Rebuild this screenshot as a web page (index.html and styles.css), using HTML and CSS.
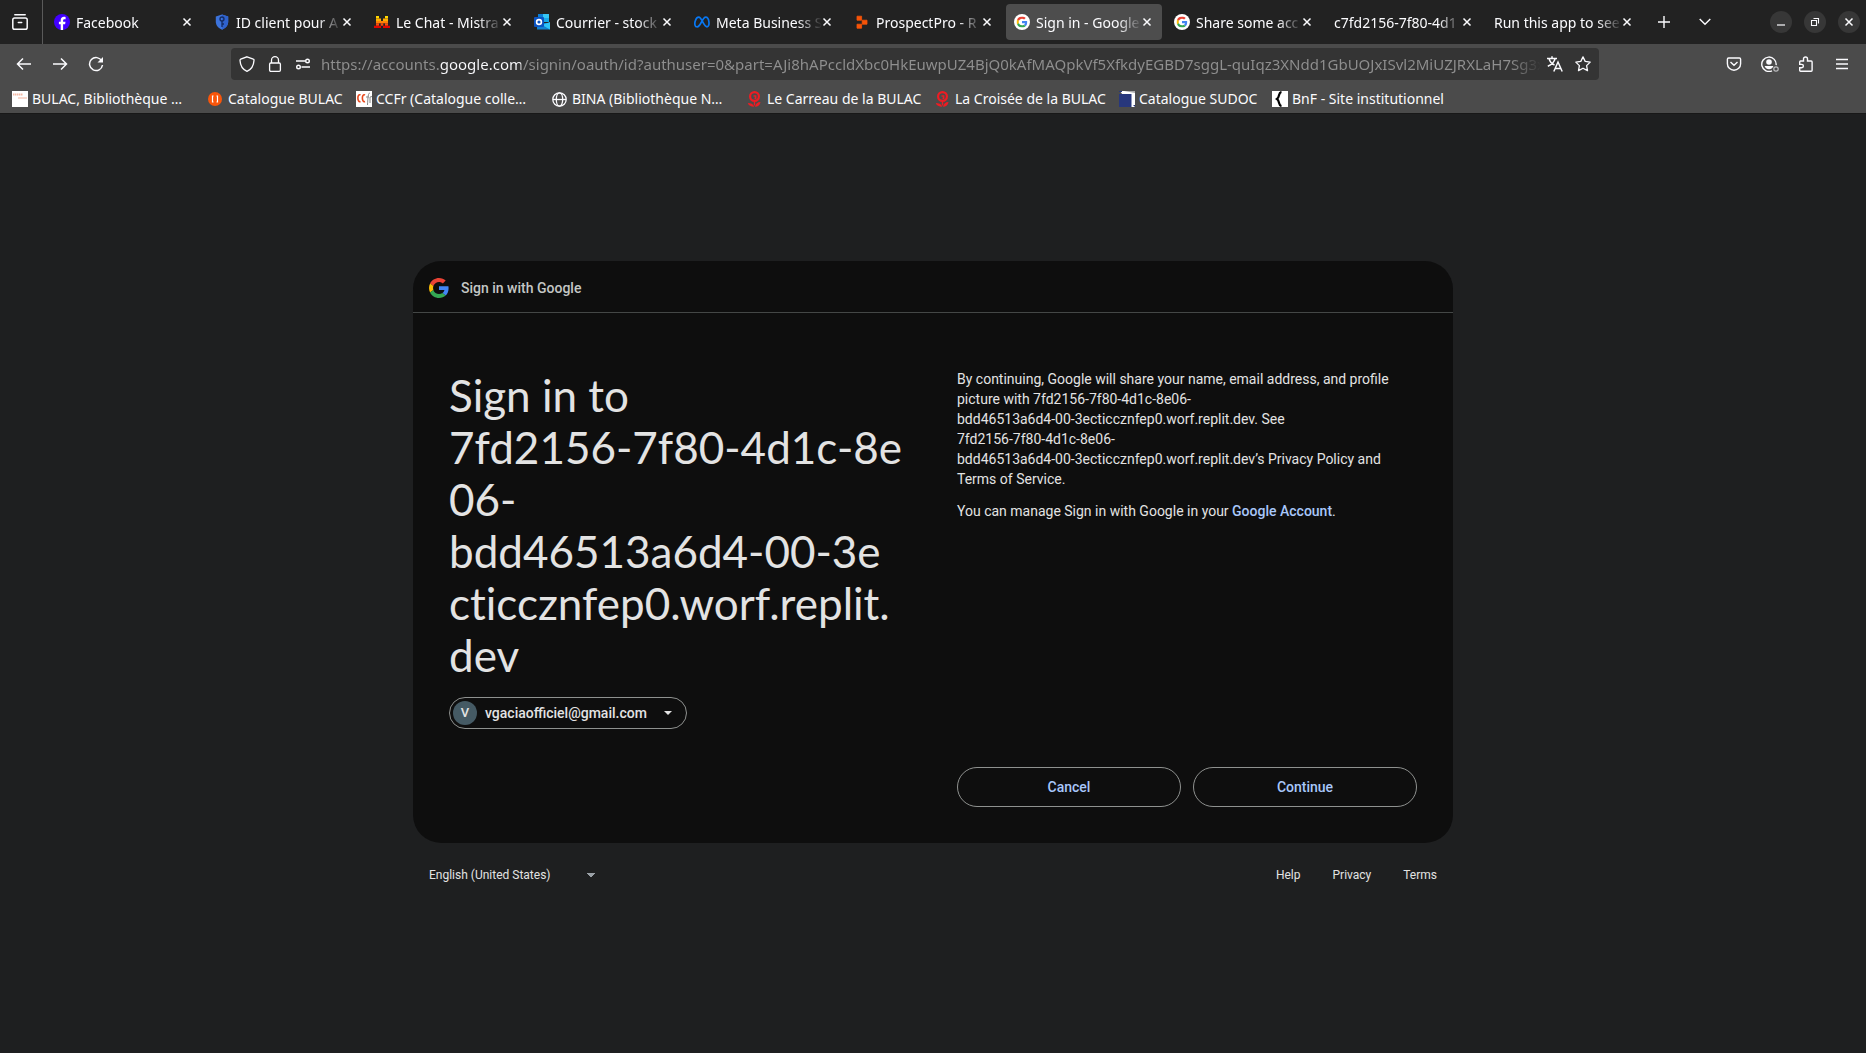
FILE: index.html
```html
<!DOCTYPE html>
<html lang="en">
<head>
<meta charset="utf-8">
<meta name="viewport" content="width=device-width, initial-scale=1">
<title>Sign in - Google Accounts</title>
<link rel="stylesheet" href="styles.css">
</head>
<body>
<svg class="sprite" aria-hidden="true">
  <symbol id="x" viewBox="0 0 10 10"><path d="M1.500 1.500l7 7M8.500 1.500l-7 7" fill="none" stroke="currentColor" stroke-width="1.500"/></symbol>
  <symbol id="g" viewBox="0 0 48 48">
    <path fill="#ea4335" d="M24 9.500c3.540 0 6.710 1.220 9.210 3.600l6.850-6.850C35.900 2.380 30.470 0 24 0 14.620 0 6.510 5.380 2.560 13.220l7.980 6.190C12.430 13.720 17.740 9.500 24 9.500z"/>
    <path fill="#4285f4" d="M46.980 24.550c0-1.570-.15-3.090-.38-4.550H24v9.020h12.940c-.58 2.960-2.260 5.480-4.780 7.180l7.730 6c4.510-4.180 7.090-10.360 7.090-17.650z"/>
    <path fill="#fbbc05" d="M10.530 28.590c-.48-1.450-.76-2.990-.76-4.590s.27-3.140.76-4.590l-7.980-6.190C.92 16.460 0 20.120 0 24c0 3.880.92 7.540 2.560 10.780l7.970-6.190z"/>
    <path fill="#34a853" d="M24 48c6.480 0 11.930-2.130 15.890-5.810l-7.730-6c-2.150 1.450-4.920 2.300-8.160 2.300-6.260 0-11.570-4.220-13.470-9.910l-7.980 6.190C6.510 42.620 14.620 48 24 48z"/>
  </symbol>
  <symbol id="gtab" viewBox="0 0 16 16"><circle cx="8" cy="8" r="8" fill="#fff"/><use href="#g" x="2.500" y="2.500" width="11" height="11"/></symbol>
  <symbol id="flower" viewBox="0 0 16 16"><g fill="none" stroke="#ee1c23"><circle cx="7.500" cy="5.500" r="4.400" stroke-width="2.200"/><path d="M6.500 5h2.200v2.200H7.500M7.500 10v4.500" stroke-width="1.400"/></g><path d="M7.300 15.800C4 15.800 1.500 14.500.8 12c3 0 5.500 1 6.500 3.800zM8 15.800c.5-3 2.500-4.800 5.500-4.800-.3 2.800-2.500 4.800-5.500 4.800z" fill="#ee1c23"/></symbol>
</svg>

<header class="browser">
  <div class="tabbar">
    <button class="tool view" aria-label="Recent browsing"><svg width="16" height="16" viewBox="0 0 16 16"><g fill="none" stroke="currentColor" stroke-width="1.500" stroke-linecap="round"><path d="M2.800 .8h10.400"/><rect x=".8" y="4" width="14.400" height="11.200" rx="1.800"/><path d="M6.300 8.500h3.400"/></g></svg></button>
    <div class="tabs" role="tablist">
      <div class="tab"><button class="tab-title" role="tab"><svg class="fav" viewBox="0 0 16 16"><circle cx="8" cy="8" r="8" fill="#4200ff"/><path d="M6.700 16v-5.700H4.900V7.700h1.800V6.400c0-2.400 1.200-3.600 3.300-3.600.7 0 1.300.1 1.600.2v2.200h-1c-1.200 0-1.500.5-1.500 1.500v1h2.400l-.4 2.600h-2V16z" fill="#fff"/></svg><span>Facebook</span></button><button class="close" aria-label="Close tab"><svg><use href="#x"/></svg></button></div>
      <div class="tab"><button class="tab-title" role="tab"><svg class="fav" viewBox="0 0 16 16"><path d="M8 .5l6.200 2v5c0 4-2.500 6.500-6.200 8.200C4.300 14 1.800 11.500 1.800 7.500v-5z" fill="#3c73db"/><path d="M8 .5l6.200 2v5c0 4-2.500 6.500-6.200 8.200z" fill="#2f62cc"/><g fill="none" stroke="#142b62" stroke-width="1.300"><circle cx="8" cy="5" r="2"/><path d="M8 7v6M8 10h2"/></g></svg><span>ID client pour A</span></button><button class="close" aria-label="Close tab"><svg><use href="#x"/></svg></button></div>
      <div class="tab"><button class="tab-title" role="tab"><svg class="fav" viewBox="0 0 16 16"><path d="M2 2h3v2.500H2zM11 2h3v2.500h-3z" fill="#ffd800"/><path d="M2 4.500h5V7H2zM9 4.500h5V7H9z" fill="#ffaf00"/><path d="M2 7h12v2.300H2z" fill="#ff8205"/><path d="M2 9.300h3v2.400H2zM6.700 9.300h2.600v2.400H6.700zM11 9.300h3v2.400h-3z" fill="#fa500f"/><path d="M0 11.700h7V14H0zM9 11.700h7V14H9z" fill="#e10500"/></svg><span>Le Chat - Mistra</span></button><button class="close" aria-label="Close tab"><svg><use href="#x"/></svg></button></div>
      <div class="tab"><button class="tab-title" role="tab"><svg class="fav" viewBox="0 0 16 16"><path d="M4 0h11v8H4z" fill="#0a7bd4"/><path d="M9 0h6v4H9z" fill="#35c5f4"/><path d="M9 4h6v4H9z" fill="#16a7e8"/><path d="M3 9h13v6.500H3z" fill="#1182d2"/><path d="M16 8v7.500L8 11z" fill="#2fc4f7"/><rect y="3" width="10" height="10" rx="1" fill="#0b53c1"/><circle cx="5" cy="8" r="2.400" fill="none" stroke="#fff" stroke-width="1.600"/></svg><span>Courrier - stock</span></button><button class="close" aria-label="Close tab"><svg><use href="#x"/></svg></button></div>
      <div class="tab"><button class="tab-title" role="tab"><svg class="fav" viewBox="0 0 16 16"><path d="M1.700 12.500C-.3 10 1.500 3.200 4.800 3.200c3 0 4.700 9.600 8.200 9.600 3.300 0 2.300-9.600-1.300-9.600-3.200 0-5.200 9.600-8.400 9.600-.7 0-1.200-.1-1.600-.3z" fill="none" stroke="#0877f2" stroke-width="1.700"/></svg><span>Meta Business S</span></button><button class="close" aria-label="Close tab"><svg><use href="#x"/></svg></button></div>
      <div class="tab"><button class="tab-title" role="tab"><svg class="fav" viewBox="0 0 16 16"><path d="M3 2.200h4.600v4H3zM8.200 6.200h4.800v4H8.200zM3 10.200h4.600v4H3z" fill="#f75408" stroke="#f75408" stroke-width=".8" stroke-linejoin="round"/></svg><span>ProspectPro - R</span></button><button class="close" aria-label="Close tab"><svg><use href="#x"/></svg></button></div>
      <div class="tab active"><button class="tab-title" role="tab" aria-selected="true"><svg class="fav"><use href="#gtab"/></svg><span>Sign in - Google</span></button><button class="close" aria-label="Close tab"><svg><use href="#x"/></svg></button></div>
      <div class="tab"><button class="tab-title" role="tab"><svg class="fav"><use href="#gtab"/></svg><span>Share some acc</span></button><button class="close" aria-label="Close tab"><svg><use href="#x"/></svg></button></div>
      <div class="tab"><button class="tab-title" role="tab"><span>c7fd2156-7f80-4d1</span></button><button class="close" aria-label="Close tab"><svg><use href="#x"/></svg></button></div>
      <div class="tab"><button class="tab-title" role="tab"><span>Run this app to see</span></button><button class="close" aria-label="Close tab"><svg><use href="#x"/></svg></button></div>
    </div>
    <button class="tool plus" aria-label="New tab"><svg width="12" height="12" viewBox="0 0 12 12"><path d="M6 0v12M0 6h12" stroke="currentColor" stroke-width="1.400"/></svg></button>
    <button class="tool list" aria-label="List all tabs"><svg width="12" height="8" viewBox="0 0 12 8"><path d="M.7 1L6 6.300 11.300 1" fill="none" stroke="currentColor" stroke-width="1.400"/></svg></button>
    <div class="window">
      <button aria-label="Minimize"><svg width="10" height="10" viewBox="0 0 10 10"><path d="M1 8h8" stroke="currentColor" stroke-width="1.200"/></svg></button>
      <button aria-label="Restore"><svg width="10" height="10" viewBox="0 0 10 10"><path d="M1.500 3.500h5v5h-5zM3.500 1.500h5v5" fill="none" stroke="currentColor" stroke-width="1.100"/></svg></button>
      <button aria-label="Close window"><svg width="10" height="10"><use href="#x"/></svg></button>
    </div>
  </div>

  <div class="navbar">
    <button class="tool" aria-label="Back"><svg width="16" height="16" viewBox="0 0 16 16"><path d="M15 8H1.800M7 2.500L1.500 8 7 13.500" fill="none" stroke="currentColor" stroke-width="1.500"/></svg></button>
    <button class="tool" aria-label="Forward"><svg width="16" height="16" viewBox="0 0 16 16"><path d="M1 8h13.200M9 2.500L14.500 8 9 13.500" fill="none" stroke="currentColor" stroke-width="1.500"/></svg></button>
    <button class="tool" aria-label="Reload"><svg width="16" height="16" viewBox="0 0 16 16"><path d="M13.800 5A6.500 6.500 0 1 0 14.500 9" fill="none" stroke="currentColor" stroke-width="1.500"/><path d="M15 1v5.500H9.500z" fill="currentColor"/></svg></button>
    <div class="spring"></div>
    <div class="urlbar">
      <button class="in" aria-label="Tracking protection"><svg width="16" height="16" viewBox="0 0 16 16"><path d="M8 .8l6.300 2.400c.6.200.8.600.7 1.200-.3 5-2.300 9-7 10.900C3.300 13.400 1.300 9.400 1 4.400c0-.6.200-1 .7-1.200z" fill="none" stroke="currentColor" stroke-width="1.300"/></svg></button>
      <button class="in" aria-label="Site security"><svg width="16" height="16" viewBox="0 0 16 16"><g fill="none" stroke="currentColor" stroke-width="1.300"><rect x="2.600" y="7" width="10.800" height="8.300" rx="1.200"/><path d="M4.500 7V4.200a3.500 3.500 0 0 1 7 0V7"/></g></svg></button>
      <button class="in" aria-label="Permissions"><svg width="16" height="16" viewBox="0 0 16 16"><g fill="none" stroke="currentColor" stroke-width="1.400"><circle cx="12.500" cy="5" r="1.800"/><path d="M1 5h9M6.500 11H15"/><circle cx="3.500" cy="11" r="1.800"/></g></svg></button>
      <input class="url" type="text" aria-label="Address" value="https://accounts.google.com/signin/oauth/id?authuser=0&amp;part=AJi8hAPccldXbc0HkEuwpUZ4BjQ0kAfMAQpkVf5XfkdyEGBD7sggL-quIqz3XNdd1GbUOJxISvl2MiUZJRXLaH7Sg3x">
      <button class="in" aria-label="Translate page"><svg width="16" height="16" viewBox="0 0 16 16"><g fill="none" stroke="currentColor" stroke-width="1.500"><path d="M0 2.500h10M5 .3v2.200M2 2.500c1 3.800 3.200 5.500 5.500 6.500M8.200 2.500C7 6.500 4 9 .8 10.200M6.800 15.500l4.200-9.500 4.200 9.500M8.200 12.500h5.600"/></g></svg></button>
      <button class="in" aria-label="Bookmark this page"><svg width="16" height="16" viewBox="0 0 16 16"><path d="M8 .9l2.200 4.500 5 .7-3.600 3.500.9 5L8 12.200l-4.500 2.400.9-5L.8 6.100l5-.7z" fill="none" stroke="currentColor" stroke-width="1.300" stroke-linejoin="round"/></svg></button>
    </div>
    <div class="spring"></div>
    <button class="tool" aria-label="Pocket"><svg width="16" height="16" viewBox="0 0 16 16"><path d="M2.600 2h10.800c.7 0 1.200.5 1.200 1.200v4.500a6.600 6.600 0 0 1-13.200 0V3.200C1.400 2.500 1.900 2 2.600 2zM4.500 6l3.500 3.300L11.500 6" fill="none" stroke="currentColor" stroke-width="1.400"/></svg></button>
    <button class="tool" aria-label="Account"><svg width="18" height="16" viewBox="0 0 18 16"><g fill="none" stroke="currentColor"><path d="M11 14.800a7.200 7.200 0 1 1 4.100-5.600" stroke-width="1.400"/><circle cx="15" cy="13" r="2.200" stroke-width="1.200" opacity=".65"/></g><circle cx="8" cy="6" r="2.800" fill="currentColor"/><path d="M3.600 10h8.800c-.5 2-2 3.200-4.400 3.200S4.100 12 3.600 10z" fill="currentColor"/></svg></button>
    <button class="tool" aria-label="Extensions"><svg width="16" height="16" viewBox="0 0 16 16"><path d="M5.500 5V3a2 2 0 0 1 4 0v2h3.700c.5 0 .9.400.9.900v8.400c0 .5-.4.900-.9.900H2.600c-.5 0-.9-.4-.9-.9v-2.500h2a1.700 1.700 0 0 0 0-3.400h-2V5.900c0-.5.4-.9.900-.9z" fill="none" stroke="currentColor" stroke-width="1.400"/></svg></button>
    <button class="tool" aria-label="Menu"><svg width="14" height="12" viewBox="0 0 14 12"><path d="M1 1.500h12M1 6h12M1 10.500h12" stroke="currentColor" stroke-width="1.300"/></svg></button>
  </div>

  <nav class="bookmarks" aria-label="Bookmarks">
    <a href="#"><svg viewBox="0 0 16 16"><path fill="#fff" d="M0 0h16v16H0z"/><path d="M1 3.500h10" stroke="#f4b8a4" stroke-width="2" stroke-dasharray="1.500 .5"/><path d="M6 7h9" stroke="#f3b29c"/></svg><span>BULAC, Bibliothèque …</span></a>
    <a href="#"><svg viewBox="0 0 16 16"><circle cx="7" cy="8" r="7" fill="#f9560b"/><path d="M5.500 5h-1v6h1M8.500 5h1v6h-1" fill="none" stroke="#fff" stroke-width="1.200"/></svg><span>Catalogue BULAC</span></a>
    <a href="#"><svg viewBox="0 0 16 16"><path fill="#fff" d="M0 0h16v16H0z"/><g fill="none"><path d="M4.500 4C1 2 1 12 4.500 10.500M9 4C5.500 2 5.500 12 9 10.500" stroke="#e8471b" stroke-width="1.600"/><path d="M14 2c-2 0-2 4-2.500 12M10 6h3M14 12V6l2-.5" stroke="#888"/></g></svg><span>CCFr (Catalogue colle…</span></a>
    <a href="#"><svg viewBox="0 0 16 16"><g fill="none" stroke="#fbfbfe" stroke-width="1.300"><circle cx="7.500" cy="8.500" r="6.700"/><ellipse cx="7.500" cy="8.500" rx="3.200" ry="6.700"/><path d="M1 8.500h13"/></g></svg><span>BINA (Bibliothèque N…</span></a>
    <a href="#"><svg><use href="#flower"/></svg><span>Le Carreau de la BULAC</span></a>
    <a href="#"><svg><use href="#flower"/></svg><span>La Croisée de la BULAC</span></a>
    <a href="#"><svg viewBox="0 0 16 16"><path fill="#fff" d="M1 0h15v16h-4z"/><path fill="#aaa" d="M5 0h11v2z"/><path fill="#27377c" d="M0 3h12.500v13H0zM0 0h3v1H0zM14 14h2v2z"/></svg><span>Catalogue SUDOC</span></a>
    <a href="#"><svg viewBox="0 0 16 16"><path fill="#fff" d="M0 0h16v16H0z"/><path d="M9.500 1C6 1.500 8 6 5 8c3 2 1 6.500 4.500 7" fill="none" stroke="#000" stroke-width="2.200"/></svg><span>BnF - Site institutionnel</span></a>
  </nav>
</header>

<div class="page">
  <main class="card">
    <div class="card-head"><svg width="20" height="20"><use href="#g"/></svg><span>Sign in with Google</span></div>
    <div class="card-body">
      <section class="intro">
        <h1>Sign in to<br>7fd2156-7f80-4d1c-8e<br>06-<br>bdd46513a6d4-00-3e<br>cticcznfep0.worf.replit.<br>dev</h1>
        <button class="account"><span class="avatar">V</span><span>vgaciaofficiel@gmail.com</span><svg width="8" height="4" viewBox="0 0 8 4"><path d="M0 0h8L4 4z" fill="currentColor"/></svg></button>
      </section>
      <section class="consent">
        <p>By continuing, Google will share your name, email address, and profile<br>picture with 7fd2156-7f80-4d1c-8e06-<br>bdd46513a6d4-00-3ecticcznfep0.worf.replit.dev. See<br>7fd2156-7f80-4d1c-8e06-<br>bdd46513a6d4-00-3ecticcznfep0.worf.replit.dev’s Privacy Policy and<br>Terms of Service.</p>
        <p>You can manage Sign in with Google in your <a href="#">Google Account</a>.</p>
        <div class="actions"><button>Cancel</button><button>Continue</button></div>
      </section>
    </div>
  </main>
  <footer class="foot">
    <select class="lang" aria-label="Language"><option>English (United States)</option></select>
    <nav><a href="#">Help</a><a href="#">Privacy</a><a href="#">Terms</a></nav>
  </footer>
</div>
</body>
</html>
```
FILE: styles.css
```css
* { box-sizing: border-box; }

body {
  margin: 0;
  min-height: 100vh;
  display: flex;
  flex-direction: column;
  background: #1e1f20;
  font-family: Roboto, sans-serif;
  color: #e3e3e3;
}

button, input, select {
  font: inherit;
  color: inherit;
  background: none;
  border: 0;
  padding: 0;
  margin: 0;
}

a { color: inherit; text-decoration: none; }
svg { display: block; flex: none; }
.sprite { position: absolute; width: 0; height: 0; }

/* Browser chrome */
.browser {
  font-family: "Noto Sans", sans-serif;
  font-size: 14px;
  color: #fbfbfe;
  background: #4b4b4b;
  border-bottom: 1px solid #181818;
}

.tabbar { display: flex; align-items: center; height: 44px; background: #222; }

.tool {
  flex: none;
  width: 36px;
  height: 36px;
  display: flex;
  align-items: center;
  justify-content: center;
}

.view { width: 43px; height: 44px; border-right: 1px solid #5a5a5a; padding-right: 2px; }
.tabs { display: flex; gap: 4px; padding: 0 4px 0 3px; flex: 0 1 1603px; min-width: 0; }

.tab {
  flex: 1;
  min-width: 0;
  height: 36px;
  display: flex;
  align-items: center;
  padding: 0 10px 0 8px;
  border-radius: 4px;
}

.tab.active { background: #4d4d4d; }

.tab-title { flex: 1; min-width: 0; display: flex; align-items: center; gap: 6px; text-align: left; }
.tab-title span {
  flex: 1;
  overflow: hidden;
  white-space: nowrap;
  mask-image: linear-gradient(to left, transparent, #000 24px);
}
.fav { width: 16px; height: 16px; }
.close svg { width: 10px; height: 10px; }

.plus { margin-right: 5px; }
.window { margin-left: auto; display: flex; gap: 12px; padding-right: 6px; }
.window button {
  width: 22px;
  height: 22px;
  border-radius: 50%;
  background: #373737;
  display: flex;
  align-items: center;
  justify-content: center;
}

.navbar { display: flex; align-items: center; padding: 0 6px; height: 40px; }
.spring { flex: 0 1 117px; }

.urlbar {
  flex: 1;
  min-width: 0;
  height: 32px;
  display: flex;
  align-items: center;
  padding: 0 2px;
  background: #343434;
  border-radius: 4px;
}

.in { flex: none; width: 28px; height: 28px; display: flex; align-items: center; justify-content: center; }

/* The host name is brighter than the rest, and the tail fades out */
.url {
  flex: 1;
  min-width: 0;
  height: 28px;
  margin-left: 4px;
  font-size: 15px;
  color: transparent;
  background: linear-gradient(to right, #8f8f8f 119px, #fbfbfe 119px, #fbfbfe 200px, #8f8f8f 200px, #8f8f8f calc(100% - 30px), transparent);
  background-clip: text;
  -webkit-background-clip: text;
}

.bookmarks {
  display: grid;
  grid-template-columns: 196px 148px 196px 195px 188px 184px 153px auto;
  height: 29px;
  padding-left: 12px;
}

.bookmarks a { display: flex; align-items: center; gap: 4px; height: 29px; white-space: nowrap; }
.bookmarks svg { width: 16px; height: 16px; }

/* Sign-in page */
.page {
  flex: 1;
  display: flex;
  flex-direction: column;
  justify-content: center;
  width: 100%;
  max-width: 1040px;
  margin: 0 auto;
  padding-bottom: 15px;
}

.card {
  display: flex;
  flex-direction: column;
  min-height: 582px;
  background: #0e0e0e;
  border-radius: 28px;
}

.card-head {
  display: flex;
  align-items: center;
  gap: 12px;
  height: 52px;
  padding: 3px 16px 0;
  border-bottom: 1px solid #444746;
  font-size: 14px;
  font-weight: 500;
  color: #c4c7c5;
}

.card-body { flex: 1; display: grid; grid-template-columns: 1fr 1fr; padding: 56px 36px 36px; }

h1 {
  margin: 0 0 16px;
  font-family: Lato, sans-serif;
  font-size: 44px;
  line-height: 52px;
  font-weight: 400;
  font-variant-ligatures: none;
  white-space: nowrap;
}

.account {
  display: flex;
  align-items: center;
  min-width: 238px;
  height: 32px;
  padding: 0 14px 0 3px;
  border: 1px solid #8e918f;
  border-radius: 16px;
  font-size: 14px;
  font-weight: 500;
}
.account svg { margin-left: auto; }

.avatar {
  width: 24px;
  height: 24px;
  margin-right: 8px;
  border-radius: 50%;
  background: #455a64;
  font-size: 13px;
  line-height: 24px;
  text-align: center;
}

.consent { display: flex; flex-direction: column; padding-left: 24px; font-size: 14px; line-height: 20px; }
.consent p { margin: 0 0 12px; }
.consent a { color: #a8c7fa; font-weight: 500; }

.actions { display: flex; gap: 12px; margin-top: auto; }
.actions button {
  flex: 1;
  height: 40px;
  border: 1px solid #8e918f;
  border-radius: 20px;
  color: #a8c7fa;
  font-weight: 500;
}

.foot {
  display: flex;
  align-items: center;
  justify-content: space-between;
  padding: 16px 16px 0;
  height: 48px;
  font-size: 12px;
}
.foot nav { display: flex; gap: 32px; }

.lang {
  appearance: none;
  width: 166px;
  height: 32px;
  background: conic-gradient(from -45deg at 50% 100%, #9aa0a6 90deg, transparent 0) right center / 8px 4px no-repeat;
}
```
